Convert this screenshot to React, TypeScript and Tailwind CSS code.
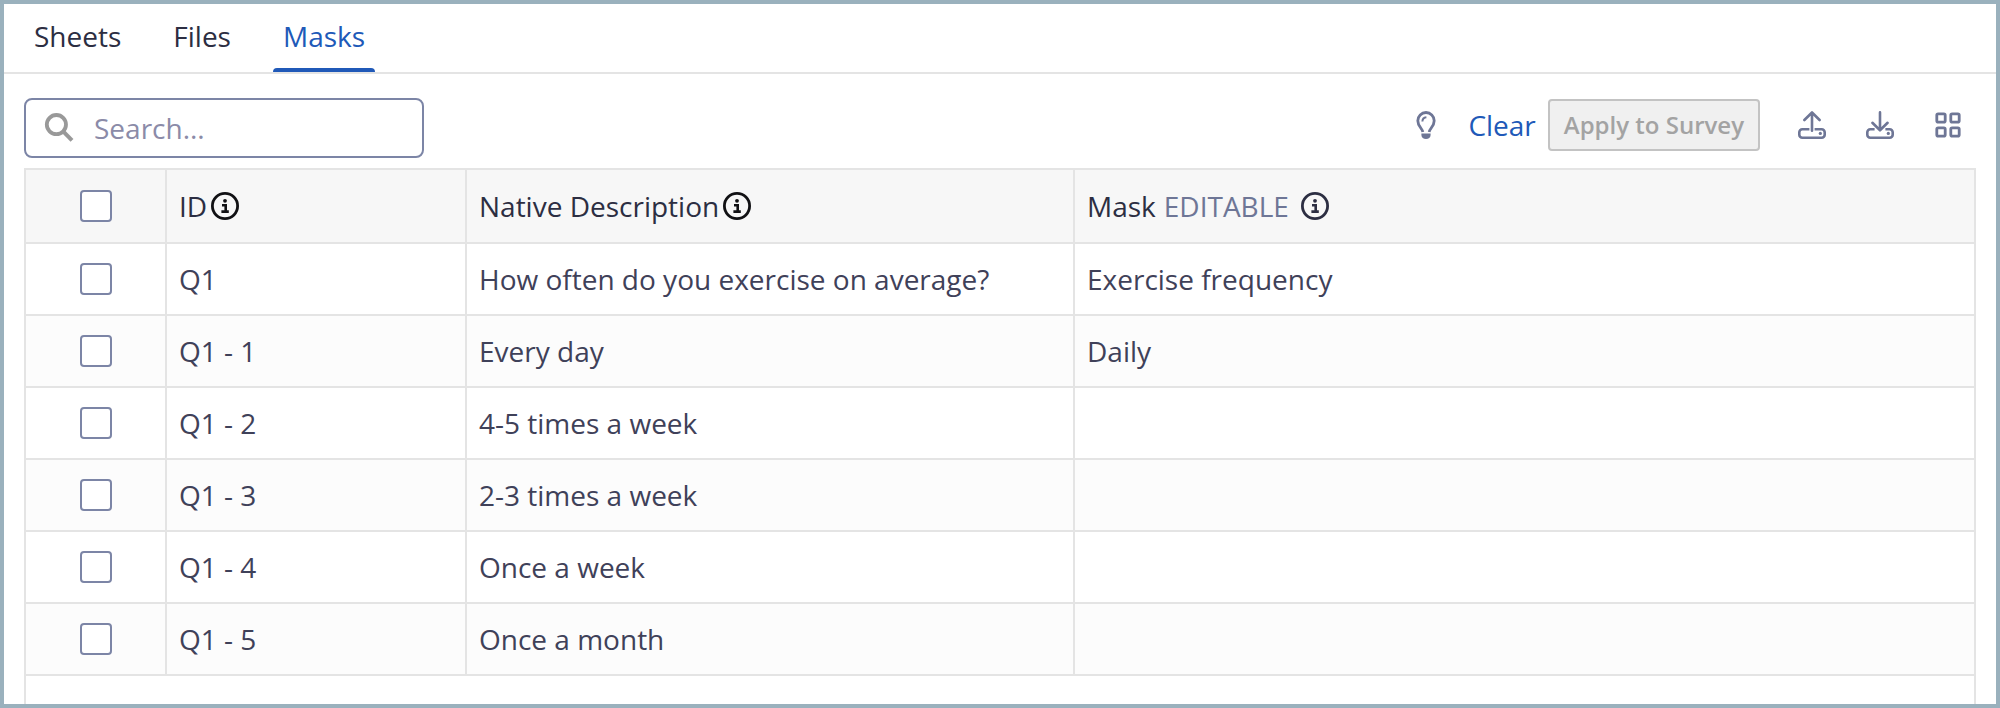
import { useState, type ReactNode } from 'react';

interface MaskRow {
  id: string;
  description: string;
  mask: string;
}

const TABS = ['Sheets', 'Files', 'Masks'];

const ROWS: MaskRow[] = [
  { id: 'Q1', description: 'How often do you exercise on average?', mask: 'Exercise frequency' },
  { id: 'Q1 - 1', description: 'Every day', mask: 'Daily' },
  { id: 'Q1 - 2', description: '4-5 times a week', mask: '' },
  { id: 'Q1 - 3', description: '2-3 times a week', mask: '' },
  { id: 'Q1 - 4', description: 'Once a week', mask: '' },
  { id: 'Q1 - 5', description: 'Once a month', mask: '' },
];

function InfoIcon({ className = '' }: { className?: string }) {
  return (
    <svg className={`size-7 shrink-0 ${className}`} viewBox="0 0 28 28" fill="none" aria-hidden="true">
      <circle cx="14" cy="14" r="12.6" stroke="currentColor" strokeWidth="2.8" />
      <circle cx="14" cy="8.8" r="1.9" fill="currentColor" />
      <path d="M11 13.2H14.7V19.6M10.4 19.6H17.8" stroke="currentColor" strokeWidth="2.6" />
    </svg>
  );
}

function SearchIcon() {
  return (
    <svg className="size-7.5 shrink-0 text-[#999999]" viewBox="0 0 30 30" fill="none" stroke="currentColor" aria-hidden="true">
      <circle cx="12.4" cy="11.6" r="9.6" strokeWidth="3.8" />
      <path d="M18.4 17.6L28 27.4" strokeWidth="4" />
    </svg>
  );
}

function BulbIcon() {
  return (
    <svg className="size-7" viewBox="0 0 28 28" fill="none" stroke="currentColor" strokeWidth="2.8" aria-hidden="true">
      <path d="M10.8 21C10.2 17.2 5.8 15.2 5.8 9.7A8.2 8.2 0 0 1 22.2 9.7C22.2 15.2 17.8 17.2 17.2 21" />
      <path d="M10.4 10.6C10.4 8 11.8 6.4 14.4 6.2" strokeWidth="2" />
      <path d="M9.4 22.6H18.6V24C18.6 26.4 16.6 28 14 28S9.4 26.4 9.4 24Z" fill="currentColor" stroke="none" />
    </svg>
  );
}

function UploadIcon() {
  return (
    <svg className="size-7" viewBox="0 0 28 28" fill="none" stroke="currentColor" strokeWidth="2.6" aria-hidden="true">
      <path d="M11.4 18.2H4.3A3 3 0 0 0 1.3 21.2V23.7A3 3 0 0 0 4.3 26.7H23.7A3 3 0 0 0 26.7 23.7V21.2A3 3 0 0 0 23.7 18.2H16.6" />
      <path d="M14 19.7V1.6M6.4 9L14 1.5L21.6 9" strokeLinecap="round" strokeLinejoin="round" />
      <circle cx="22.3" cy="22.4" r="1.6" fill="currentColor" stroke="none" />
    </svg>
  );
}

function DownloadIcon() {
  return (
    <svg className="size-7" viewBox="0 0 28 28" fill="none" stroke="currentColor" strokeWidth="2.6" aria-hidden="true">
      <path d="M8.6 18.2H4.3A3 3 0 0 0 1.3 21.2V23.7A3 3 0 0 0 4.3 26.7H23.7A3 3 0 0 0 26.7 23.7V21.2A3 3 0 0 0 23.7 18.2H19.4" />
      <path d="M14 1.4V19M6.4 11.8L14 19.3L21.6 11.8" strokeLinecap="round" strokeLinejoin="round" />
      <circle cx="22.3" cy="22.4" r="1.6" fill="currentColor" stroke="none" />
    </svg>
  );
}

function GridIcon() {
  return (
    <svg className="size-7" viewBox="0 0 28 28" fill="none" stroke="currentColor" strokeWidth="2.8" aria-hidden="true">
      <rect x="2.8" y="2.8" width="8.4" height="8.4" rx="1.4" />
      <rect x="16.8" y="2.8" width="8.4" height="8.4" rx="1.4" />
      <rect x="2.8" y="16.8" width="8.4" height="8.4" rx="1.4" />
      <rect x="16.8" y="16.8" width="8.4" height="8.4" rx="1.4" />
    </svg>
  );
}

function IconButton({ label, children }: { label: string; children: ReactNode }) {
  return (
    <button type="button" aria-label={label} className="p-1 text-[#6e7696]">
      {children}
    </button>
  );
}

function Checkbox({ label, checked, onChange }: { label: string; checked: boolean; onChange: () => void }) {
  return (
    <input
      type="checkbox"
      aria-label={label}
      checked={checked}
      onChange={onChange}
      className="mx-auto block size-8 appearance-none rounded-sm border-2 border-[#7c85a6] bg-white checked:bg-[#2059b8]"
    />
  );
}

export default function App() {
  const [activeTab, setActiveTab] = useState('Masks');
  const [query, setQuery] = useState('');
  const [selected, setSelected] = useState<string[]>([]);

  const rows = ROWS.filter((row) =>
    `${row.id} ${row.description} ${row.mask}`.toLowerCase().includes(query.toLowerCase())
  );
  const allSelected = rows.length > 0 && rows.every((row) => selected.includes(row.id));

  const toggleRow = (id: string) => {
    setSelected((prev) => (prev.includes(id) ? prev.filter((item) => item !== id) : [...prev, id]));
  };

  return (
    <div className="flex min-h-screen flex-col border-4 border-[#9ab1bd] bg-white font-['Open_Sans','Noto_Sans',sans-serif] text-[28px] leading-9 text-[#3f4159]">
      <nav className="flex h-[70px] gap-8 border-b-2 border-[#e4e4e4] px-5">
        {TABS.map((tab) => (
          <button
            key={tab}
            type="button"
            onClick={() => setActiveTab(tab)}
            className={`relative px-2.5 pb-1 ${tab === activeTab ? 'text-[#2059b8]' : 'text-[#2c2e42]'}`}
          >
            {tab}
            {tab === activeTab && (
              <span className="absolute inset-x-0 bottom-0 h-1 rounded-t bg-[#2059b8]" />
            )}
          </button>
        ))}
      </nav>

      <main className="flex flex-1 flex-col px-5 pt-6">
        <div className="flex items-center justify-between pb-2.5">
          <label className="flex h-15 w-[400px] items-center gap-5 rounded-lg border-2 border-[#7c85a6] px-4.5">
            <SearchIcon />
            <input
              type="text"
              aria-label="Search"
              placeholder="Search..."
              value={query}
              onChange={(e) => setQuery(e.target.value)}
              className="w-full min-w-0 outline-none placeholder:text-[#8b8ba8]"
            />
          </label>

          <div className="flex items-center gap-8 pr-2.5 pb-1.5">
            <div className="mr-0.5 flex items-center">
              <IconButton label="Tips">
                <BulbIcon />
              </IconButton>
              <button type="button" onClick={() => setSelected([])} className="pr-3 pl-6 text-[#2059b8]">
                Clear
              </button>
              <button
                type="button"
                disabled
                className="h-13 rounded border-2 border-[#c3c3c3] bg-[#f0f0f0] px-3.5 text-2xl font-semibold text-[#a3a3a3]"
              >
                Apply to Survey
              </button>
            </div>
            <IconButton label="Upload">
              <UploadIcon />
            </IconButton>
            <IconButton label="Download">
              <DownloadIcon />
            </IconButton>
            <IconButton label="Change view">
              <GridIcon />
            </IconButton>
          </div>
        </div>

        <div className="flex-1 border-x-2 border-t-2 border-[#e4e4e4]">
          <table className="w-full table-fixed border-separate border-spacing-0 text-left">
            <colgroup>
              <col className="w-[141px]" />
              <col className="w-[300px]" />
              <col className="w-[608px]" />
              <col />
            </colgroup>
            <thead className="bg-[#f7f7f7] text-[#2c2e42]">
              <tr className="h-[74px]">
                <th className="border-r-2 border-b-2 border-[#e4e4e4]">
                  <Checkbox
                    label="Select all"
                    checked={allSelected}
                    onChange={() => setSelected(allSelected ? [] : rows.map((row) => row.id))}
                  />
                </th>
                <th className="border-r-2 border-b-2 border-[#e4e4e4] px-3 font-normal">
                  <span className="flex items-center gap-1">
                    ID
                    <InfoIcon className="text-[#111114]" />
                  </span>
                </th>
                <th className="border-r-2 border-b-2 border-[#e4e4e4] px-3 font-normal">
                  <span className="flex items-center gap-1">
                    Native Description
                    <InfoIcon className="text-[#111114]" />
                  </span>
                </th>
                <th className="border-b-2 border-[#e4e4e4] px-3 font-normal">
                  <span className="flex items-center gap-2">
                    Mask
                    <span className="text-[#6e7696]">EDITABLE</span>
                    <InfoIcon className="ml-1" />
                  </span>
                </th>
              </tr>
            </thead>
            <tbody>
              {rows.map((row) => (
                <tr key={row.id} className="h-18 even:bg-[#fcfcfc]">
                  <td className="border-r-2 border-b-2 border-[#e4e4e4]">
                    <Checkbox
                      label={`Select ${row.id}`}
                      checked={selected.includes(row.id)}
                      onChange={() => toggleRow(row.id)}
                    />
                  </td>
                  <td className="border-r-2 border-b-2 border-[#e4e4e4] px-3">{row.id}</td>
                  <td className="border-r-2 border-b-2 border-[#e4e4e4] px-3">{row.description}</td>
                  <td className="border-b-2 border-[#e4e4e4] px-3">{row.mask}</td>
                </tr>
              ))}
            </tbody>
          </table>
        </div>
      </main>
    </div>
  );
}
